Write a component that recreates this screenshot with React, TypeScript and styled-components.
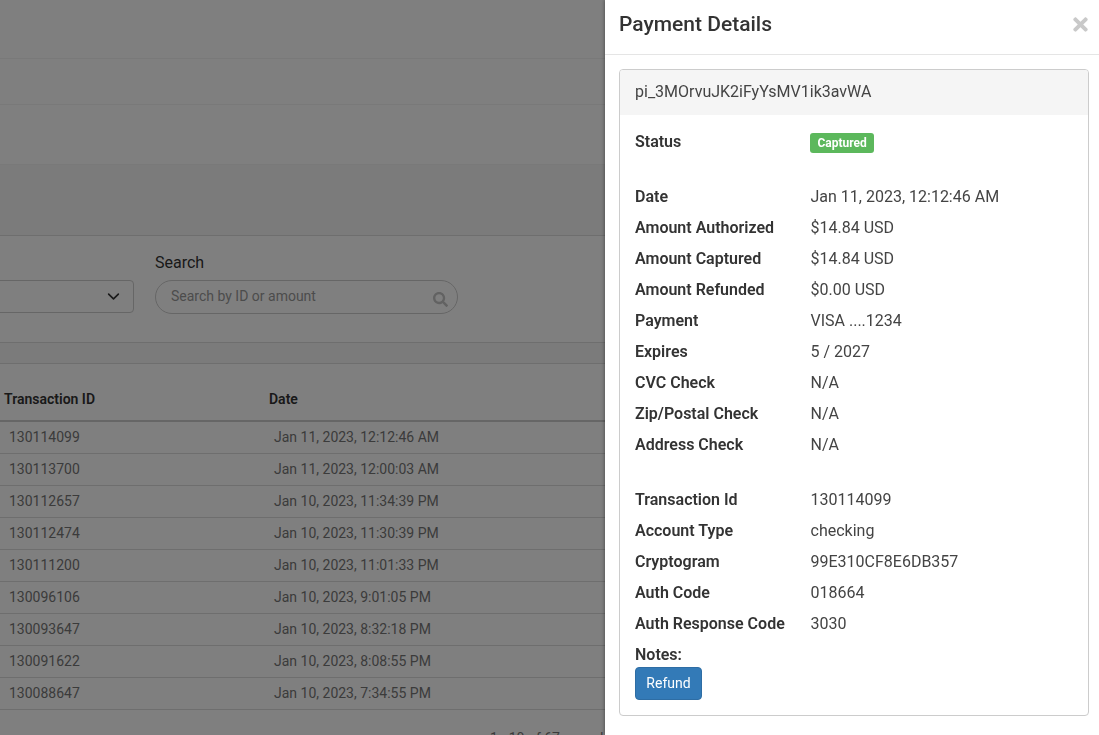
import React from 'react';
import styled, { createGlobalStyle } from 'styled-components';
import { FaSearch, FaTimes } from 'react-icons/fa';

const transactions = [
  { id: '130114099', date: 'Jan 11, 2023, 12:12:46 AM' },
  { id: '130113700', date: 'Jan 11, 2023, 12:00:03 AM' },
  { id: '130112657', date: 'Jan 10, 2023, 11:34:39 PM' },
  { id: '130112474', date: 'Jan 10, 2023, 11:30:39 PM' },
  { id: '130111200', date: 'Jan 10, 2023, 11:01:33 PM' },
  { id: '130096106', date: 'Jan 10, 2023, 9:01:05 PM' },
  { id: '130093647', date: 'Jan 10, 2023, 8:32:18 PM' },
  { id: '130091622', date: 'Jan 10, 2023, 8:08:55 PM' },
  { id: '130088647', date: 'Jan 10, 2023, 7:34:55 PM' },
];

const cardDetails = [
  { label: 'Date', value: 'Jan 11, 2023, 12:12:46 AM' },
  { label: 'Amount Authorized', value: '$14.84 USD' },
  { label: 'Amount Captured', value: '$14.84 USD' },
  { label: 'Amount Refunded', value: '$0.00 USD' },
  { label: 'Payment', value: 'VISA ....1234' },
  { label: 'Expires', value: '5 / 2027' },
  { label: 'CVC Check', value: 'N/A' },
  { label: 'Zip/Postal Check', value: 'N/A' },
  { label: 'Address Check', value: 'N/A' },
];

const gatewayDetails = [
  { label: 'Transaction Id', value: '130114099' },
  { label: 'Account Type', value: 'checking' },
  { label: 'Cryptogram', value: '99E310CF8E6DB357' },
  { label: 'Auth Code', value: '018664' },
  { label: 'Auth Response Code', value: '3030' },
];

const GlobalStyle = createGlobalStyle`
  html, body {
    margin: 0;
    height: 100%;
    overflow: hidden;
    font-family: Roboto, "Liberation Sans", sans-serif;
    background: #fff;
  }
  * {
    box-sizing: border-box;
  }
`;

const Page = styled.div`
  height: 735px;
  overflow: hidden;
  background: #fff;
`;

const TopRow = styled.div<{ $height: number }>`
  height: ${(p) => p.$height}px;
  border-bottom: 1px solid #f2f2f2;
`;

const TopBlock = styled.div`
  height: 59px;
  background: #fff;
  border-bottom: 1px solid #f3f3f3;
`;

const Band = styled.div`
  height: 70px;
  background: #f6f6f6;
`;

const Filters = styled.div`
  display: flex;
  align-items: flex-start;
  gap: 21px;
  height: 108px;
  margin-left: -20px;
  padding-top: 16px;
  border-top: 1px solid #ddd;
  border-bottom: 1px solid #ddd;
`;

const Field = styled.div`
  display: flex;
  flex-direction: column;
  gap: 7px;
`;

const FieldLabel = styled.label`
  font-size: 16px;
  line-height: 21px;
  color: #333;
`;

const Select = styled.div`
  display: flex;
  align-items: center;
  justify-content: flex-end;
  width: 154px;
  height: 33px;
  margin-top: 28px;
  padding-right: 13px;
  border: 1px solid #ccc;
  border-radius: 4px;
  color: #333;
`;

const SearchBox = styled.div`
  display: flex;
  align-items: center;
  justify-content: space-between;
  width: 303px;
  height: 34px;
  padding: 0 9px 2px 15px;
  border: 1px solid #ccc;
  border-radius: 17px;
  font-size: 14px;
  color: #999;
`;

const SearchIcon = styled(FaSearch)`
  margin-top: 6px;
  font-size: 15px;
  color: #c4c4c4;
`;

const Spacer = styled.div`
  height: 21px;
  background: #f6f6f6;
  border-bottom: 1px solid #ddd;
`;

const Table = styled.table`
  width: 100%;
  border-collapse: collapse;
  table-layout: fixed;
  font-size: 14px;
`;

const HeadCell = styled.th<{ $width?: number }>`
  width: ${(p) => (p.$width ? `${p.$width}px` : 'auto')};
  height: 57px;
  padding: 13px 0 0 4px;
  text-align: left;
  font-weight: 600;
  color: #333;
  border-bottom: 2px solid #ccc;
`;

const Cell = styled.td`
  height: 32px;
  padding: 0 0 0 9px;
  color: #777;
  border-bottom: 1px solid #ddd;
`;

const Backdrop = styled.div`
  position: fixed;
  inset: 0;
  background: rgba(0, 0, 0, 0.5);
`;

const Pagination = styled.div`
  padding: 20px 0 0 490px;
  font-size: 14px;
  color: #777;
`;

const Panel = styled.aside`
  position: fixed;
  top: 0;
  right: 0;
  bottom: 0;
  width: 494px;
  background: #fff;
  box-shadow: -1px 0 3px rgba(0, 0, 0, 0.3);
`;

const PanelHeader = styled.header`
  display: flex;
  align-items: center;
  justify-content: space-between;
  height: 55px;
  padding: 0 8px 6px 14px;
  border-bottom: 1px solid #e5e5e5;
`;

const Title = styled.h4`
  margin: 0;
  font-size: 21px;
  font-weight: 500;
  line-height: 26px;
  color: #333;
`;

const CloseButton = styled.button`
  display: flex;
  padding: 0;
  border: 0;
  background: none;
  font-size: 21px;
  color: #c9c9c9;
`;

const PanelBody = styled.div`
  padding: 14px 10px 0 14px;
`;

const Card = styled.section`
  border: 1px solid #ccc;
  border-radius: 4px;
  overflow: hidden;
`;

const CardHeader = styled.div`
  height: 45px;
  padding: 0 15px;
  font-size: 16px;
  line-height: 43px;
  color: #444;
  background: #f5f5f5;
`;

const CardBody = styled.div`
  padding: 15px;
`;

const DetailGroup = styled.dl`
  margin: 0;
  padding-bottom: 24px;

  &:last-of-type {
    padding-bottom: 0;
  }
`;

const DetailRow = styled.div`
  display: grid;
  grid-template-columns: 175.5px 1fr;
  margin-bottom: 8px;
  font-size: 16px;
  line-height: 23px;
  color: #333;
`;

const Label = styled.dt`
  font-weight: 600;
`;

const Value = styled.dd`
  margin: 0;
  color: #444;
`;

const Badge = styled.span`
  display: inline-block;
  margin: 3px 0 0 -1px;
  padding: 0 7px 0 8px;
  font-size: 12px;
  font-weight: 700;
  line-height: 20px;
  vertical-align: top;
  color: #fff;
  background: #5cb85c;
  border-radius: 3px;
`;

const NotesLabel = styled.div`
  font-size: 16px;
  font-weight: 600;
  line-height: 23px;
  color: #333;
`;

const RefundButton = styled.button`
  display: block;
  width: 67px;
  height: 33px;
  margin-top: 1px;
  padding: 0 0 2px;
  font-family: inherit;
  font-size: 14px;
  color: #fff;
  background: #337ab7;
  border: 1px solid #2e6da4;
  border-radius: 4px;
`;

const Details: React.FC<{ rows: { label: string; value: string }[] }> = ({ rows }) => (
  <DetailGroup>
    {rows.map((row) => (
      <DetailRow key={row.label}>
        <Label>{row.label}</Label>
        <Value>{row.value}</Value>
      </DetailRow>
    ))}
  </DetailGroup>
);

const App: React.FC = () => (
  <>
    <GlobalStyle />
    <Page>
      <TopBlock />
      <TopRow $height={46} />
      <TopRow $height={60} />
      <Band />
      <Filters>
        <Select>
          <svg width="13" height="13" viewBox="0 0 16 16" fill="none" stroke="currentColor" strokeWidth="2" strokeLinecap="round" strokeLinejoin="round">
            <path d="M2 5l6 6 6-6" />
          </svg>
        </Select>
        <Field>
          <FieldLabel>Search</FieldLabel>
          <SearchBox>
            Search by ID or amount
            <SearchIcon />
          </SearchBox>
        </Field>
      </Filters>
      <Spacer />
      <Table>
        <thead>
          <tr>
            <HeadCell $width={265}>Transaction ID</HeadCell>
            <HeadCell>Date</HeadCell>
          </tr>
        </thead>
        <tbody>
          {transactions.map((t) => (
            <tr key={t.id}>
              <Cell>{t.id}</Cell>
              <Cell>{t.date}</Cell>
            </tr>
          ))}
        </tbody>
      </Table>
      <Pagination>1 - 10 of 67 records</Pagination>
    </Page>
    <Backdrop />
    <Panel>
      <PanelHeader>
        <Title>Payment Details</Title>
        <CloseButton aria-label="Close">
          <FaTimes />
        </CloseButton>
      </PanelHeader>
      <PanelBody>
        <Card>
          <CardHeader>pi_3MOrvuJK2iFyYsMV1ik3avWA</CardHeader>
          <CardBody>
            <DetailGroup>
              <DetailRow>
                <Label>Status</Label>
                <Value>
                  <Badge>Captured</Badge>
                </Value>
              </DetailRow>
            </DetailGroup>
            <Details rows={cardDetails} />
            <Details rows={gatewayDetails} />
            <NotesLabel>Notes:</NotesLabel>
            <RefundButton>Refund</RefundButton>
          </CardBody>
        </Card>
      </PanelBody>
    </Panel>
  </>
);

export default App;
